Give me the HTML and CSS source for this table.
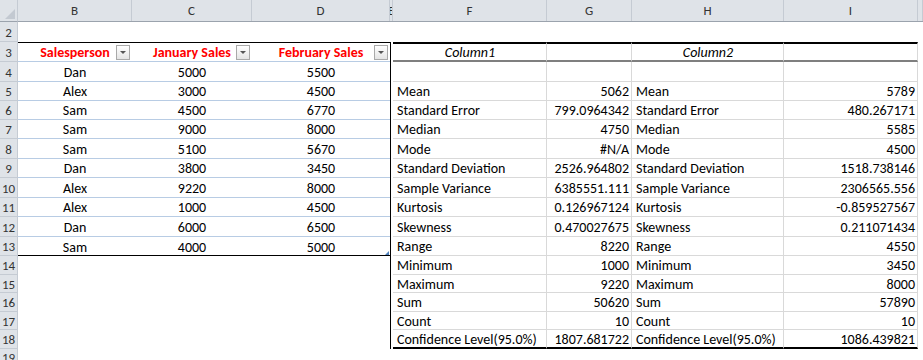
FILE: index.html
```html
<!DOCTYPE html>
<html lang="en">
<head>
  <meta charset="UTF-8" />
  <meta name="viewport" content="width=device-width, initial-scale=1.0" />
  <title>Sales - Descriptive Statistics</title>
  <link rel="stylesheet" href="styles.css">
</head>
<body>
  <div class="sheet">
    <div class="corner"><span class="select-all"></span></div>

    <div class="col-heads">
      <div class="col-head">B</div>
      <div class="col-head">C</div>
      <div class="col-head">D</div>
      <div class="col-head narrow">E</div>
      <div class="col-head">F</div>
      <div class="col-head">G</div>
      <div class="col-head">H</div>
      <div class="col-head">I</div>
      <div class="col-head"></div>
    </div>

    <div class="row-heads">
      <div class="row-head">2</div>
      <div class="row-head">3</div>
      <div class="row-head">4</div>
      <div class="row-head">5</div>
      <div class="row-head">6</div>
      <div class="row-head">7</div>
      <div class="row-head">8</div>
      <div class="row-head">9</div>
      <div class="row-head">10</div>
      <div class="row-head">11</div>
      <div class="row-head">12</div>
      <div class="row-head">13</div>
      <div class="row-head">14</div>
      <div class="row-head">15</div>
      <div class="row-head">16</div>
      <div class="row-head">17</div>
      <div class="row-head">18</div>
      <div class="row-head">19</div>
    </div>

    <div class="cells">
      <!-- sales table B3:D13 -->
      <div class="sales">
        <div class="cell th">Salesperson<span class="filter"></span></div>
        <div class="cell th">January Sales<span class="filter"></span></div>
        <div class="cell th">February Sales<span class="filter"></span></div>

        <div class="cell">Dan</div><div class="cell">5000</div><div class="cell">5500</div>
        <div class="cell">Alex</div><div class="cell">3000</div><div class="cell">4500</div>
        <div class="cell">Sam</div><div class="cell">4500</div><div class="cell">6770</div>
        <div class="cell">Sam</div><div class="cell">9000</div><div class="cell">8000</div>
        <div class="cell">Sam</div><div class="cell">5100</div><div class="cell">5670</div>
        <div class="cell">Dan</div><div class="cell">3800</div><div class="cell">3450</div>
        <div class="cell">Alex</div><div class="cell">9220</div><div class="cell">8000</div>
        <div class="cell">Alex</div><div class="cell">1000</div><div class="cell">4500</div>
        <div class="cell">Dan</div><div class="cell">6000</div><div class="cell">6500</div>
        <div class="cell">Sam</div><div class="cell">4000</div><div class="cell">5000</div>
        <span class="resize-handle"></span>
      </div>

      <div class="divider"></div>

      <!-- descriptive statistics F3:I18 -->
      <div class="stats">
        <div class="st head title">Column1</div><div class="st head"></div>
        <div class="st head title">Column2</div><div class="st head"></div>

        <div class="st"></div><div class="st"></div><div class="st"></div><div class="st"></div>

        <div class="st">Mean</div><div class="st num">5062</div>
        <div class="st">Mean</div><div class="st num">5789</div>
        <div class="st">Standard Error</div><div class="st num">799.0964342</div>
        <div class="st">Standard Error</div><div class="st num">480.267171</div>
        <div class="st">Median</div><div class="st num">4750</div>
        <div class="st">Median</div><div class="st num">5585</div>
        <div class="st">Mode</div><div class="st num">#N/A</div>
        <div class="st">Mode</div><div class="st num">4500</div>
        <div class="st">Standard Deviation</div><div class="st num">2526.964802</div>
        <div class="st">Standard Deviation</div><div class="st num">1518.738146</div>
        <div class="st">Sample Variance</div><div class="st num">6385551.111</div>
        <div class="st">Sample Variance</div><div class="st num">2306565.556</div>
        <div class="st">Kurtosis</div><div class="st num">0.126967124</div>
        <div class="st">Kurtosis</div><div class="st num">-0.859527567</div>
        <div class="st">Skewness</div><div class="st num">0.470027675</div>
        <div class="st">Skewness</div><div class="st num">0.211071434</div>
        <div class="st">Range</div><div class="st num">8220</div>
        <div class="st">Range</div><div class="st num">4550</div>
        <div class="st">Minimum</div><div class="st num">1000</div>
        <div class="st">Minimum</div><div class="st num">3450</div>
        <div class="st">Maximum</div><div class="st num">9220</div>
        <div class="st">Maximum</div><div class="st num">8000</div>
        <div class="st">Sum</div><div class="st num">50620</div>
        <div class="st">Sum</div><div class="st num">57890</div>
        <div class="st">Count</div><div class="st num">10</div>
        <div class="st">Count</div><div class="st num">10</div>
        <div class="st last">Confidence Level(95.0%)</div><div class="st num last">1807.681722</div>
        <div class="st last">Confidence Level(95.0%)</div><div class="st num last">1086.439821</div>
      </div>
    </div>
  </div>
</body>
</html>
```

FILE: styles.css
```css
* {
  box-sizing: border-box;
  margin: 0;
  padding: 0;
}

body {
  font-family: 'Carlito', 'Lato', sans-serif;
  font-size: 14px;
  color: #000;
  background: #fff;
  overflow: hidden;
}

.sheet {
  display: grid;
  grid-template-columns: 18px 1fr;
  grid-template-rows: 22px 1fr;
  height: 100vh;
  overflow: hidden;
}

/* headers */

.corner {
  background: #dfe3e8;
  border-right: 1px solid #c5cbd3;
  border-bottom: 1px solid #9ba3ad;
  position: relative;
}

.select-all {
  position: absolute;
  right: 2px;
  bottom: 2px;
  width: 0;
  height: 0;
  border-left: 10px solid transparent;
  border-bottom: 10px solid #c3c9d1;
}

.col-heads {
  display: grid;
  grid-template-columns: 114px 120px 138px 3px 154px 85px 152px 134px 1fr;
  background: #dfe3e8;
  border-bottom: 1px solid #9ba3ad;
}

.col-head {
  display: flex;
  align-items: center;
  justify-content: center;
  border-right: 1px solid #c5cbd3;
  color: #333;
  font-size: 13px;
  overflow: hidden;
}

.col-head.narrow {
  justify-content: flex-start;
  text-indent: -2px;
}

.row-heads {
  display: grid;
  grid-template-rows: 20px 20px 20px 19px 19px 19px 20px 19px 20px 19px 20px 19px 19px 18px 19px 18px 19px 1fr;
  background: #dfe3e8;
  border-right: 1px solid #c5cbd3;
}

.row-head {
  display: flex;
  align-items: center;
  justify-content: center;
  border-bottom: 1px solid #c5cbd3;
  color: #333;
  font-size: 13px;
  padding-top: 1px;
}

/* cell area */

.cells {
  display: grid;
  grid-template-columns: 114px 120px 138px 3px 154px 85px 152px 134px 1fr;
  grid-template-rows: 20px 20px 20px 19px 19px 19px 20px 19px 20px 19px 20px 19px 19px 18px 19px 18px 19px 1fr;
}

.sales {
  grid-column: 1 / 4;
  grid-row: 2 / 13;
  display: grid;
  grid-template-columns: 114px 120px 138px;
  grid-template-rows: 20px 20px 19px 19px 19px 20px 19px 20px 19px 20px 19px;
  box-shadow: inset 0 1px #000, inset 0 -1px #000;
  position: relative;
}

.cell {
  display: flex;
  align-items: center;
  justify-content: center;
  border-bottom: 1px solid #b8cce4;
  padding-top: 1px;
  position: relative;
}

.sales .cell:nth-last-child(-n+4) {
  border-bottom: none;
}

.cell.th {
  color: #ff0000;
  font-weight: bold;
}

.filter {
  position: absolute;
  right: 2px;
  top: 3px;
  width: 14px;
  height: 15px;
  border: 1px solid #a9a9a9;
  background: linear-gradient(#ffffff, #e4e4e4);
}

.filter::after {
  content: "";
  position: absolute;
  left: 3px;
  top: 5px;
  border-left: 3px solid transparent;
  border-right: 3px solid transparent;
  border-top: 3px solid #555;
}

.resize-handle {
  position: absolute;
  right: 1px;
  bottom: 1px;
  width: 0;
  height: 0;
  border-left: 4px solid transparent;
  border-bottom: 4px solid #4f81bd;
}

.divider {
  grid-column: 4;
  grid-row: 2 / 18;
  border-left: 1px solid #000;
}

.stats {
  grid-column: 5 / 9;
  grid-row: 2 / 18;
  display: grid;
  grid-template-columns: 154px 85px 152px 134px;
  grid-template-rows: 20px 20px 19px 19px 19px 20px 19px 20px 19px 20px 19px 19px 18px 19px 18px 19px;
}

.st {
  display: flex;
  align-items: center;
  padding: 1px 3px 0 4px;
  border-right: 1px solid #d9d9d9;
  border-bottom: 1px solid #d9d9d9;
  white-space: nowrap;
}

.st.num {
  justify-content: flex-end;
  padding-right: 2px;
}

.st.head {
  border-top: 2px solid #000;
  border-bottom: 2px solid #7f7f7f;
}

.st.title {
  justify-content: center;
  font-style: italic;
}

.st.last {
  border-bottom: 2px solid #000;
}
```
